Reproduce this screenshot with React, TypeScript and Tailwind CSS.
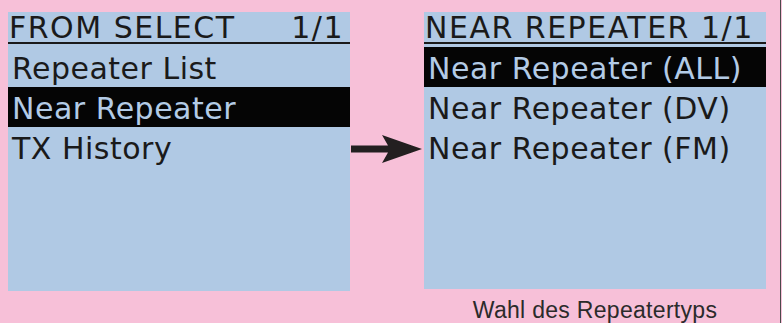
const lcd = "font-['DejaVu_Sans',sans-serif]"

const Title = ({ left, right }: { left: string; right?: string }) => (
  <div className="flex h-[32px] items-center justify-between border-b-2 border-[#1a1a1a] pl-[1px] pr-[6px] text-[30px] leading-[33px] tracking-[1.5px] text-[#1a1a1a]">
    <span>{left}</span>
    {right && <span>{right}</span>}
  </div>
)

const Row = ({ label, active }: { label: string; active?: boolean }) => (
  <div
    className={`h-[40px] pl-[4px] pt-[3px] text-[30px] leading-[37px] tracking-[0.5px] ${
      active ? 'bg-[#050505] text-[#b3cbe6]' : 'text-[#1a1a1a]'
    }`}
  >
    {label}
  </div>
)

const Panel = ({ children }: { children: React.ReactNode }) => (
  <div className={`${lcd} flex h-[279px] w-[342px] flex-col bg-[#b0c9e4] whitespace-nowrap`}>{children}</div>
)

const App = () => {
  return (
    <div className="h-[323px] w-[782px] bg-[#f7c0d8]">
      <div className="flex h-full w-[781px] border-r border-[#4a4a4a] pl-[8px] pt-[12px]">
        <Panel>
          <Title left="FROM SELECT" right="1/1" />
          <div className="pt-[3px]">
            <Row label="Repeater List" />
            <Row label="Near Repeater" active />
            <Row label="TX History" />
          </div>
        </Panel>

        <div className="flex w-[74px] justify-center pt-[122px]">
          <svg width="72" height="30" viewBox="0 0 72 30">
            <path d="M0 11.5 H37 L31 1 L71 15 L31 29 L37 18.5 H0 Z" fill="#231f20" />
          </svg>
        </div>

        <div className="flex flex-col">
          <Panel>
            <Title left="NEAR REPEATER 1/1" />
            <div className="pt-[3px]">
              <Row label="Near Repeater (ALL)" active />
              <Row label="Near Repeater (DV)" />
              <Row label="Near Repeater (FM)" />
            </div>
          </Panel>
          <p className="mt-[9px] text-center font-['Liberation_Sans',Arial,sans-serif] text-[23px] leading-[25px] tracking-[0.3px] text-[#2b2b2b]">
            Wahl des Repeatertyps
          </p>
        </div>
      </div>
    </div>
  )
}

export default App
